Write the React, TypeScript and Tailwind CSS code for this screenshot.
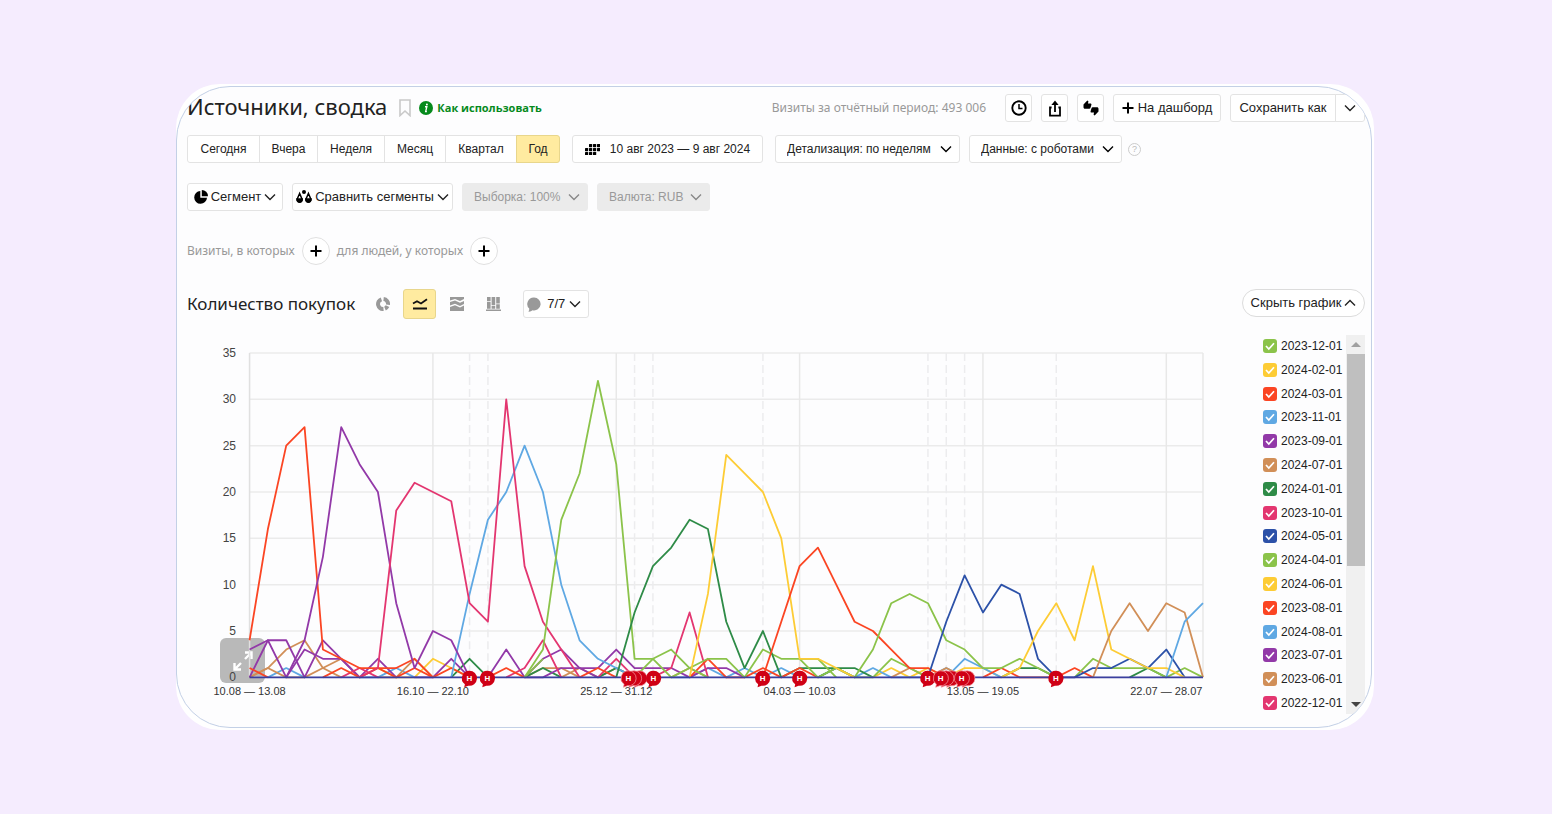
import { useState } from "react";
import type { ReactNode } from "react";
import clsx from "clsx";

const GREEN = "#8bc34a";
const YELLOW = "#fdcc35";
const RED = "#fb4523";
const BLUE = "#5fa8e3";
const PURPLE = "#9239a8";
const BROWN = "#d18f58";
const FOREST = "#2e8b47";
const PINK = "#e33670";
const NAVY = "#2c51a8";

const periods = [
  { name: "Сегодня", width: "w-[73px]" },
  { name: "Вчера", width: "w-[59px]" },
  { name: "Неделя", width: "w-[68px]" },
  { name: "Месяц", width: "w-[62px]" },
  { name: "Квартал", width: "w-[72px]" },
  { name: "Год", width: "w-[44px]" },
];

const legend = [
  { name: "2023-12-01", color: "bg-[#8bc34a]" },
  { name: "2024-02-01", color: "bg-[#fdcc35]" },
  { name: "2024-03-01", color: "bg-[#fb4523]" },
  { name: "2023-11-01", color: "bg-[#5fa8e3]" },
  { name: "2023-09-01", color: "bg-[#9239a8]" },
  { name: "2024-07-01", color: "bg-[#d18f58]" },
  { name: "2024-01-01", color: "bg-[#2e8b47]" },
  { name: "2023-10-01", color: "bg-[#e33670]" },
  { name: "2024-05-01", color: "bg-[#2c51a8]" },
  { name: "2024-04-01", color: "bg-[#8bc34a]" },
  { name: "2024-06-01", color: "bg-[#fdcc35]" },
  { name: "2023-08-01", color: "bg-[#fb4523]" },
  { name: "2024-08-01", color: "bg-[#5fa8e3]" },
  { name: "2023-07-01", color: "bg-[#9239a8]" },
  { name: "2023-06-01", color: "bg-[#d18f58]" },
  { name: "2022-12-01", color: "bg-[#e33670]" },
];

// first week of the run, then one value per week
const series: { color: string; from: number; values: number[] }[] = [
  // weeks with only a few purchases
  { color: YELLOW, from: 6, values: [0, 1, 0, 0, 2, 1, 0] },
  { color: YELLOW, from: 34, values: [0, 1, 0, 1, 0, 1, 1, 0] },
  { color: BLUE, from: 1, values: [0, 1, 0] },
  { color: BLUE, from: 6, values: [0, 0, 1, 0] },
  { color: BLUE, from: 23, values: [0, 0, 1, 0, 1, 0] },
  { color: BLUE, from: 31, values: [0, 1, 0, 1, 0, 0, 0, 1, 0] },
  { color: BLUE, from: 28, values: [0, 1, 0] },
  { color: BLUE, from: 38, values: [0, 2, 1, 0] },
  { color: BROWN, from: 0, values: [0, 1, 3, 4, 1, 2, 0] },
  { color: BROWN, from: 0, values: [0, 1, 0, 0, 1, 0] },
  { color: BROWN, from: 7, values: [0, 0, 2, 0] },
  { color: BROWN, from: 15, values: [0, 1, 1, 0] },
  { color: BROWN, from: 17, values: [0, 1, 0, 1, 0] },
  { color: BROWN, from: 23, values: [0, 1, 0] },
  { color: BROWN, from: 35, values: [0, 1, 0, 1, 0] },
  { color: FOREST, from: 11, values: [0, 2, 0] },
  { color: FOREST, from: 15, values: [0, 1, 0] },
  { color: FOREST, from: 19, values: [0, 1, 0] },
  { color: FOREST, from: 29, values: [0, 1, 1, 1, 1, 0] },
  { color: FOREST, from: 31, values: [0, 1, 0] },
  { color: FOREST, from: 41, values: [0, 1, 1, 0] },
  { color: FOREST, from: 48, values: [0, 1, 0] },
  { color: PURPLE, from: 0, values: [3, 4, 4, 0, 4, 2, 0, 2, 0] },
  { color: PURPLE, from: 0, values: [0, 4, 0, 3, 2, 2, 0] },
  { color: PURPLE, from: 9, values: [0, 0, 2, 0] },
  { color: PURPLE, from: 13, values: [0, 3, 0, 2, 3, 1, 1, 3, 1, 1, 1, 0, 1, 1, 0] },
  { color: PURPLE, from: 15, values: [0, 0, 1, 1, 0] },
  { color: PINK, from: 5, values: [0, 1, 0] },
  { color: PINK, from: 14, values: [0, 1, 4, 0] },
  { color: PINK, from: 19, values: [0, 2, 0, 0, 1, 7, 0] },
  { color: RED, from: 0, values: [1, 0] },
  { color: RED, from: 4, values: [0, 1, 0, 1, 0, 1, 0, 1, 0] },
  { color: RED, from: 13, values: [0, 1, 0] },
  { color: RED, from: 18, values: [0, 1, 0] },
  { color: RED, from: 24, values: [0, 2, 0, 0, 1, 0, 1, 0] },
  { color: RED, from: 40, values: [0, 1, 0, 0, 0, 1, 0] },
  { color: GREEN, from: 15, values: [0, 2] },
  { color: GREEN, from: 21, values: [0, 2, 0, 1, 0] },
  { color: GREEN, from: 30, values: [2, 0, 1, 0, 0, 2, 1, 0] },
  { color: GREEN, from: 45, values: [0, 2, 1, 1, 1, 0, 1, 0] },
  // one curve for each month
  { color: BLUE, from: 11, values: [0, 9, 17, 20, 25, 20, 10, 4, 2, 1, 0] },
  { color: RED, from: 0, values: [4, 16, 25, 27, 3, 2, 1, 1, 1, 2, 0] },
  { color: PURPLE, from: 2, values: [0, 4, 13, 27, 23, 20, 8, 1, 5, 4, 0] },
  { color: PINK, from: 6, values: [0, 1, 18, 21, 20, 19, 8, 6, 30, 12, 6, 3, 0] },
  { color: GREEN, from: 15, values: [0, 3, 17, 22, 32, 23, 2, 2, 3, 1, 2, 2, 0, 3, 2, 2, 2, 0] },
  { color: FOREST, from: 20, values: [0, 7, 12, 14, 17, 16, 6, 1, 5, 0] },
  { color: YELLOW, from: 24, values: [0, 9, 24, 22, 20, 15, 2, 2, 1, 0] },
  { color: RED, from: 28, values: [0, 6, 12, 14, 10, 6, 5, 3, 1, 1, 0] },
  { color: GREEN, from: 33, values: [0, 3, 8, 9, 8, 4, 3, 1, 1, 2, 1, 0] },
  { color: NAVY, from: 37, values: [0, 6, 11, 7, 10, 9, 2, 0, 0, 1, 1, 2, 1, 3, 0] },
  { color: YELLOW, from: 41, values: [0, 1, 5, 8, 4, 12, 3, 2, 1, 1, 0] },
  { color: BROWN, from: 46, values: [0, 5, 8, 5, 8, 7, 0] },
  { color: BLUE, from: 50, values: [0, 6, 8] },
];

const yTicks = [0, 5, 10, 15, 20, 25, 30, 35];
const weekTicks = [0, 10, 20, 30, 40, 50, 52];
const holidayWeeks = [12, 13, 21, 22, 28, 37, 38, 39, 44];

const weekLabels = [
  { week: 0, text: "10.08 — 13.08" },
  { week: 10, text: "16.10 — 22.10" },
  { week: 20, text: "25.12 — 31.12" },
  { week: 30, text: "04.03 — 10.03" },
  { week: 40, text: "13.05 — 19.05" },
  { week: 50, text: "22.07 — 28.07" },
];

// "stack" is the number of notes hidden behind the front one
const notes = [
  { x: 282, stack: 0 },
  { x: 300, stack: 0 },
  { x: 441, stack: 2 },
  { x: 466, stack: 0 },
  { x: 575, stack: 0 },
  { x: 612, stack: 0 },
  { x: 740, stack: 0 },
  { x: 753, stack: 2 },
  { x: 774, stack: 1 },
  { x: 868, stack: 0 },
];

const weekX = (week: number) => 62.5 + (week * 952.5) / 52;
const valueY = (value: number) => 339 - (value * 324) / 35;

const box = "flex h-7 shrink-0 items-center justify-center rounded-[3px] border border-[#e3e3e3] bg-white";

const Chevron = ({ up, className }: { up?: boolean; className?: string }) => (
  <svg viewBox="0 0 12 8" className={clsx("h-2 w-3 shrink-0", className)} fill="none" stroke="currentColor" strokeWidth="1.4">
    <path d={up ? "M1 6.5 6 1.5l5 5" : "M1 1.5l5 5 5-5"} />
  </svg>
);

const Plus = () => (
  <svg viewBox="0 0 12 12" className="size-3 shrink-0" stroke="#000" strokeWidth="2">
    <path d="M6 .5v11M.5 6h11" />
  </svg>
);

const Dropdown = ({ label, value, width, disabled }: { label: string; value: string; width: string; disabled?: boolean }) => (
  <div className={clsx("relative h-7 shrink-0", width)}>
    <select
      aria-label={label}
      disabled={disabled}
      className={clsx(
        "h-full w-full appearance-none rounded-[3px] border pl-[11px] text-xs opacity-100",
        disabled ? "border-[#ebebeb] bg-[#ebebeb] text-[#999]" : "border-[#e3e3e3] bg-white"
      )}
    >
      <option>{`${label}: ${value}`}</option>
    </select>
    <Chevron className={clsx("pointer-events-none absolute top-2.5 right-2", disabled ? "text-[#888]" : "text-black")} />
  </div>
);

const IconButton = ({ label, children }: { label: string; children: ReactNode }) => (
  <button aria-label={label} className={clsx(box, "w-[27px]")}>
    {children}
  </button>
);

const Header = () => (
  <header className="flex h-7 items-center">
    <h1 className="pb-1 font-['Noto_Sans',sans-serif] text-[22px] leading-7 whitespace-nowrap">Источники, сводка</h1>
    <button aria-label="В закладки" className="ml-3">
      <svg viewBox="0 0 12 18" className="h-[18px] w-3" fill="none" stroke="#c9c9c9" strokeWidth="1.6">
        <path d="M1 1h10v15.6L6 12l-5 4.6z" />
      </svg>
    </button>
    <a href="#help" className="ml-2 flex items-center gap-1 font-['Open_Sans',sans-serif] text-[11px] font-bold whitespace-nowrap text-[#068a1c]">
      <svg viewBox="0 0 14 14" className="size-3.5">
        <circle cx="7" cy="7" r="7" fill="#068a1c" />
        <path d="M6 5.8h1.8L6.7 10.6h1.2" fill="none" stroke="#fff" strokeWidth="1.4" />
        <circle cx="7.9" cy="3.5" r="1" fill="#fff" />
      </svg>
      Как использовать
    </a>
    <div className="ml-auto flex items-center gap-[9px]">
      <span className="mr-2.5 font-['Noto_Sans',sans-serif] text-xs whitespace-nowrap text-[#999]">
        Визиты за отчётный период: 493 006
      </span>
      <IconButton label="История">
        <svg viewBox="0 0 16 16" className="size-4" fill="none" stroke="#000">
          <circle cx="8" cy="8" r="6.7" strokeWidth="1.9" />
          <path d="M8 4v4.4h3.5" strokeWidth="1.5" />
        </svg>
      </IconButton>
      <IconButton label="Экспорт">
        <svg viewBox="0 0 14 17" className="h-[17px] w-3.5" fill="none" stroke="#000" strokeWidth="1.8">
          <path d="M3.6 7.5H2V15.6h10V7.5h-1.6" />
          <path d="M7 12V4" />
          <path d="M3.4 5 7 .6 10.6 5z" fill="#000" stroke="none" />
        </svg>
      </IconButton>
      <IconButton label="Оценить">
        <svg viewBox="0 0 16 16" className="size-4" fill="#000">
          <path d="M.5 4.5 4.3.4l1.1.8-.4 2.200h2.300c1 0 1.300.6 1.100 1.400l-.8 2.800c-.2.8-.7 1.200-1.400 1.200H2.100C1 8.800.5 8.200.5 7.300z" />
          <path d="M15.500 11.500 11.700 15.600l-1.100-.8.4-2.200H8.700c-1 0-1.300-.6-1.100-1.400l.8-2.800c.2-.8.7-1.200 1.400-1.200h4.100c1.100 0 1.600.6 1.600 1.500z" />
        </svg>
      </IconButton>
      <button className={clsx(box, "w-[108px] gap-1")}>
        <Plus />
        На дашборд
      </button>
      <div className="flex">
        <button className={clsx(box, "w-[106px] rounded-r-none")}>Сохранить как</button>
        <button aria-label="Другие варианты" className={clsx(box, "-ml-px w-[30px] rounded-l-none")}>
          <Chevron />
        </button>
      </div>
    </div>
  </header>
);

const Periods = () => {
  const [current, setCurrent] = useState("Год");

  return (
    <div className="mt-[13px] flex items-center text-xs">
      <div className="flex">
        {periods.map((period) => (
          <button
            key={period.name}
            onClick={() => setCurrent(period.name)}
            className={clsx(
              "-mr-px h-7 border first:rounded-l-[3px] last:mr-0 last:rounded-r-[3px]",
              period.width,
              period.name === current ? "border-[#e8d68c] bg-[#ffeba0]" : "border-[#e3e3e3] bg-white"
            )}
          >
            {period.name}
          </button>
        ))}
      </div>
      <button className={clsx(box, "ml-3 w-[191px] gap-2.5")}>
        <svg viewBox="0 0 15 11" className="h-[11px] w-[15px]">
          {[0, 1, 2].map((row) =>
            [0, 1, 2, 3].map((col) => {
              if (row === 0 && col === 0) return null;
              if (row === 2 && col === 3) return null;
              return <rect key={`${row}${col}`} x={col * 4} y={row * 4} width="3.2" height="3.2" rx=".6" fill="#000" />;
            })
          )}
        </svg>
        10 авг 2023 — 9 авг 2024
      </button>
      <div className="ml-3 flex gap-[9px]">
        <Dropdown label="Детализация" value="по неделям" width="w-[185px]" />
        <Dropdown label="Данные" value="с роботами" width="w-[153px]" />
      </div>
      <button
        aria-label="Справка"
        className="ml-1.5 flex size-[13px] items-center justify-center rounded-full border border-[#ccc] text-[9px] leading-none text-[#bbb]"
      >
        ?
      </button>
    </div>
  );
};

const Segments = () => (
  <div className="mt-5 flex gap-[9px]">
    <button className={clsx(box, "w-24 gap-[3px]")}>
      <svg viewBox="0 0 14 14" className="size-3.5" fill="#000">
        <path d="M6.3 1v6.7H13A6.4 6.4 0 1 1 6.3 1z" />
        <path d="M7.8 0A6.2 6.2 0 0 1 14 6.2H7.8z" />
      </svg>
      Сегмент
      <Chevron />
    </button>
    <button className={clsx(box, "w-[161px] gap-[3px]")}>
      <svg viewBox="0 0 16 14" className="h-3.5 w-4 shrink-0" fill="none" stroke="#000" strokeWidth="1.5">
        <circle cx="8" cy="2" r="2" fill="#000" stroke="none" />
        <path d="M3.6 3.5 1.2 9a2.5 2.5 0 1 0 4.8 0zM12.4 3.5 10 9a2.5 2.5 0 1 0 4.8 0z" />
        <path d="M1 9h5.2a2.5 2.5 0 0 1-5.2 0zM9.8 9H15a2.5 2.5 0 0 1-5.2 0z" fill="#000" />
      </svg>
      Сравнить сегменты
      <Chevron />
    </button>
    <Dropdown label="Выборка" value="100%" width="w-[126px]" disabled />
    <Dropdown label="Валюта" value="RUB" width="w-[113px]" disabled />
  </div>
);

const Filters = () => (
  <div className="mt-[26px] flex items-center gap-[7px] font-['Noto_Sans',sans-serif] text-xs text-[#999]">
    <span>Визиты, в которых</span>
    <button aria-label="Добавить условие визита" className="flex size-7 items-center justify-center rounded-full border border-[#e0e0e0] bg-white">
      <Plus />
    </button>
    <span>для людей, у которых</span>
    <button aria-label="Добавить условие для людей" className="flex size-7 items-center justify-center rounded-full border border-[#e0e0e0] bg-white">
      <Plus />
    </button>
  </div>
);

const ChartToolbar = () => (
  <div className="mt-6 flex items-center">
    <h2 className="font-['Noto_Sans',sans-serif] text-[17px] whitespace-nowrap">Количество покупок</h2>
    <div className="ml-[11px] flex items-center gap-1">
      <button aria-label="Круговая диаграмма" className="flex h-[30px] w-[33px] items-center justify-center">
        <svg viewBox="0 0 14 14" className="size-3.5" fill="none" stroke="#999" strokeWidth="4">
          <path d="M7.6 2.1A5 5 0 0 1 12 7.8" />
          <path d="M11.5 9.2A5 5 0 0 1 9 11.6" />
          <path d="M7.5 12A5 5 0 0 1 5.4 2.3" />
        </svg>
      </button>
      <button
        aria-label="Линии"
        className="flex h-[30px] w-[33px] items-center justify-center rounded-[3px] border border-[#e8d68c] bg-[#ffeba0]"
      >
        <svg viewBox="0 0 16 12" className="h-3 w-4" fill="none" stroke="#111" strokeWidth="1.8">
          <path d="M1 5.500 5 3.200l4 2.300L15 1.200M1 10.500h14" />
        </svg>
      </button>
      <button aria-label="Области" className="flex h-[30px] w-[33px] items-center justify-center">
        <svg viewBox="0 0 14 14" className="size-3.5" fill="#999">
          <path d="M0 0h14v2l-4 2-5-2-5 1.500z" />
          <path d="M0 5l5-1.500 5 2.300L14 4v3l-4 2-5-2.200L0 8.500z" />
          <path d="M0 10l5-1.700 5 2.200L14 8.500V14H0z" />
        </svg>
      </button>
      <button aria-label="Колонки" className="flex h-[30px] w-[33px] items-center justify-center">
        <svg viewBox="0 0 15 14" className="h-3.5 w-[15px]" fill="#999">
          <path d="M1 0h3.600v4H1zM1 4.700h3.600v7H1zM5.600 0h3.600v8H5.600zM5.600 8.700h3.600v3H5.600zM10.200 0h3.600v6.500h-3.600zM10.200 7.200h3.600v4.500h-3.600zM0 12.400h15V14H0z" />
        </svg>
      </button>
    </div>
    <button className={clsx(box, "ml-[13px] w-[66px] gap-1.5 pr-1")}>
      <svg viewBox="0 0 14 15" className="h-[15px] w-3.5" fill="#999">
        <path d="M7 .5a6.500 6.500 0 1 1-1.500 12.800C4.500 14.300 3 14.800 1.300 14.600c.8-.8 1-1.800.9-3A6.500 6.500 0 0 1 7 .5z" />
      </svg>
      7/7
      <Chevron className="-ml-0.5" />
    </button>
    <button className="ml-auto flex h-7 w-[123px] items-center justify-center gap-[3px] self-start rounded-full border border-[#dcdcdc] bg-white">
      Скрыть график
      <Chevron up />
    </button>
  </div>
);

const Note = ({ x, stack }: { x: number; stack: number }) => (
  <g transform={`translate(${x} 340)`}>
    {Array.from({ length: stack }, (_, i) => stack - i).map((n) => (
      <path
        key={n}
        transform={`translate(${n * 5.5} 0)`}
        d="M0-7.500A7.500 7.500 0 1 1-1 7.400L-5 9l.6-3A7.500 7.500 0 0 1 0-7.500z"
        fill="#cf0015"
        stroke="#f6a0a8"
        strokeWidth=".7"
      />
    ))}
    <path d="M0-7.500A7.500 7.500 0 1 1-1 7.400L-5 9l.6-3A7.500 7.500 0 0 1 0-7.500z" fill="#cf0015" stroke={stack ? "#f6a0a8" : "none"} strokeWidth=".7" />
    <text y="3" textAnchor="middle" fontSize="8" fontWeight="700" fill="#fff">
      Н
    </text>
  </g>
);

const Chart = () => (
  <div className="relative mt-[3px] min-w-0 flex-1">
    {/* sits under the lines, so it comes before the chart */}
    <button
      aria-label="Развернуть"
      className="absolute bottom-[31px] left-[33px] flex size-[45px] items-center justify-center rounded-md bg-[#b9b9b9]"
    >
      <svg viewBox="0 0 20 20" className="size-5" fill="none" stroke="#fff" strokeWidth="2.4">
        <path d="M12 1.500h6.500V8M18 2l-6 6M1.500 12v6.500H8M2 18l6-6" />
      </svg>
    </button>
    <svg viewBox="0 0 1039 376" className="pointer-events-none relative block w-full font-['Liberation_Sans',Arial,sans-serif]">
      {yTicks.map((tick) => (
        <g key={tick}>
          <path d={`M62.500 ${valueY(tick)}H1015`} stroke="#ebebeb" strokeWidth="1.5" />
          <text x="49" y={valueY(tick) + 4} textAnchor="end" fontSize="12" fill="#444">
            {tick}
          </text>
        </g>
      ))}
      {weekTicks.map((week) => (
        <path key={week} d={`M${weekX(week)} 15V339`} stroke={week === 0 ? "#e0e0e0" : "#e8e8e8"} strokeWidth="1.5" />
      ))}
      {holidayWeeks.map((week) => (
        <path key={week} d={`M${weekX(week)} 15V339`} stroke="#ececee" strokeWidth="1.5" strokeDasharray="8 4" />
      ))}
      {series.map((line, i) => (
        <polyline
          key={i}
          points={line.values.map((value, n) => `${weekX(line.from + n)},${valueY(value)}`).join(" ")}
          fill="none"
          stroke={line.color}
          strokeWidth="1.8"
          strokeLinejoin="round"
        />
      ))}
      <path d="M62.500 339H1015" stroke="#3a3f9f" strokeWidth="1.8" />
      {weekLabels.map(({ week, text }) => (
        <text key={week} x={weekX(week)} y="357" textAnchor="middle" fontSize="11" fill="#333">
          {text}
        </text>
      ))}
      {notes.map((note) => (
        <Note key={note.x} {...note} />
      ))}
    </svg>
  </div>
);

const Legend = () => (
  <div className="flex h-[379px] w-[102px] shrink-0">
    <ul className="flex flex-1 flex-col justify-between text-xs">
      {legend.map(({ name, color }) => (
        <li key={name}>
          <label className="flex h-[22px] items-center gap-1 whitespace-nowrap">
            <span className="relative size-3.5 shrink-0">
              <input type="checkbox" defaultChecked className={clsx("block size-3.5 appearance-none rounded-[3px]", color)} />
              <svg viewBox="0 0 14 14" className="pointer-events-none absolute inset-0" fill="none" stroke="#fff" strokeWidth="1.7">
                <path d="m3 7 2.800 3L11 4.300" />
              </svg>
            </span>
            {name}
          </label>
        </li>
      ))}
    </ul>
    <div className="flex w-[19px] flex-col items-center bg-[#f0f0f0]">
      <svg viewBox="0 0 10 5" className="my-[7px] h-[5px] w-2.5" fill="#a0a0a0">
        <path d="M0 5 5 0l5 5z" />
      </svg>
      <div className="h-[212px] w-[18px] bg-[#bfbfbf]" />
      <svg viewBox="0 0 10 5" className="mt-auto mb-[7px] h-[5px] w-2.5" fill="#444">
        <path d="M0 0h10L5 5z" />
      </svg>
    </div>
  </div>
);

const App = () => {
  return (
    <div className="min-h-screen bg-[#f5ecfe] pt-[84px] pr-[178px] pb-[84px] pl-44">
      <div className="rounded-[44px] bg-white py-0.5 pr-0.5">
        <main className="overflow-hidden rounded-[54px] border border-[#c3d0e6] bg-[#fdfdfe] pt-[7px] pr-1.5 pb-[13px] pl-2.5 font-['Liberation_Sans',Arial,sans-serif] text-[13px] text-[#222]">
          <Header />
          <Periods />
          <Segments />
          <Filters />
          <ChartToolbar />
          <div className="mt-4 flex items-start gap-[36px]">
            <Chart />
            <Legend />
          </div>
        </main>
      </div>
    </div>
  );
};

export default App;
